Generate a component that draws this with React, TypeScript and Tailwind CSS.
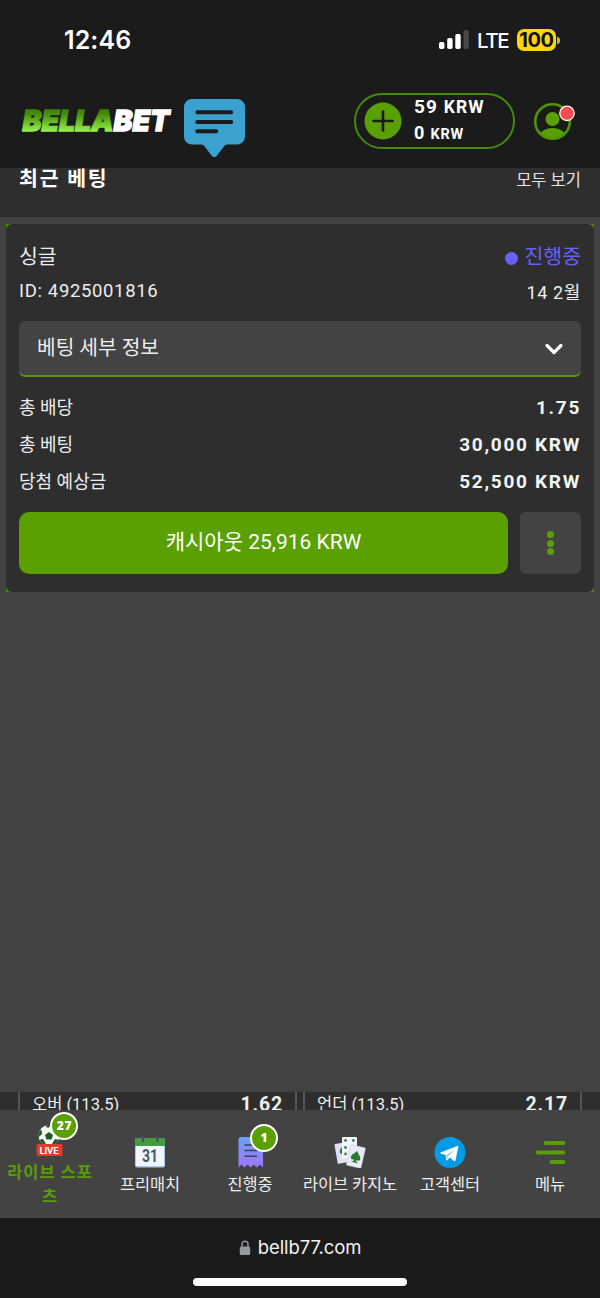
import React from 'react';

const BET_ROWS = [
	{ label: '총 배당', value: '1.75' },
	{ label: '총 베팅', value: '30,000 KRW' },
	{ label: '당첨 예상금', value: '52,500 KRW' },
];

function StatusBar() {
	return (
		<div className="flex h-20 items-center justify-between pl-16 pr-10 text-white">
			<span className="mt-px font-['Inter'] text-[25px] font-semibold leading-none tracking-[0.1px]">12:46</span>
			<div className="flex items-center">
				<svg width="31" height="20" viewBox="0 0 31 20">
					<rect x="0" y="12" width="5.4" height="7" rx="1.7" fill="#fff" />
					<rect x="8.2" y="8" width="5.4" height="11" rx="1.7" fill="#fff" />
					<rect x="16.3" y="4" width="5.4" height="15" rx="1.7" fill="#fff" />
					<rect x="24.5" y="0" width="5.4" height="19" rx="1.7" fill="#474747" />
				</svg>
				<span className="ml-[7px] mt-px w-[33px] font-['Inter'] text-[20.500px] font-medium leading-[24px] tracking-[-1.400px]">LTE</span>
				<span className="ml-[7px] flex h-[22px] w-[39px] items-center justify-center rounded-[7px] bg-[#ffd60a] font-['Inter'] text-[20px] font-bold leading-[22px] tracking-[-0.4px] text-[#111]">
					100
				</span>
				<span className="ml-px h-[7px] w-[3px] rounded-r-full bg-[#d9b70d]" />
			</div>
		</div>
	);
}

function Logo() {
	return (
		<svg width="156" height="40" viewBox="0 -5 156 40">
			<defs>
				<linearGradient id="logoGreen" gradientUnits="userSpaceOnUse" x1="0" y1="3" x2="0" y2="25">
					<stop offset="0" stopColor="#3f7d08" />
					<stop offset="0.3" stopColor="#4d930d" />
					<stop offset="1" stopColor="#94f04a" />
				</linearGradient>
			</defs>
			<text x="2.500" y="24.700" textLength="147" lengthAdjust="spacingAndGlyphs" fontFamily="Inter, sans-serif" fontWeight="900" fontStyle="italic" fontSize="29" strokeWidth="1.300">
				<tspan fill="url(#logoGreen)" stroke="url(#logoGreen)">BELLA</tspan><tspan fill="#fff" stroke="#fff">BET</tspan>
			</text>
		</svg>
	);
}

function ChatIcon() {
	return (
		<svg width="62" height="60" viewBox="0 0 62 60">
			<path d="M8 1h45a8 8 0 0 1 8 8v29.500a8 8 0 0 1-8 8h-9.500c-2 0-3 1-4 2.500l-6.500 8.500c-2 2.200-3.500 2.200-5.500 0l-6.500-8.500c-1-1.500-2-2.500-4-2.500H8a8 8 0 0 1-8-8V9a8 8 0 0 1 8-8z" fill="#3ba1ce" />
			<path d="M13.300 14.300H47.200M13.300 23.900H47.200M13.300 33.300H32.200" stroke="#1b1b1b" strokeWidth="4" strokeLinecap="round" />
		</svg>
	);
}

function Header() {
	return (
		<header className="flex h-[88px] items-start justify-between pl-5 pr-6 pt-[13px]">
			<div className="flex items-start">
				<div className="pt-2"><Logo /></div>
				<div className="ml-2 pt-[5px]"><ChatIcon /></div>
			</div>
			<div className="flex items-center">
				<div className="flex h-[56px] w-[161px] items-center rounded-full border-2 border-[#458a0b] pl-2">
					<svg width="38" height="38" viewBox="0 0 38 38">
						<circle cx="19" cy="19" r="18.500" fill="#5aa002" />
						<path d="M9.500 19H28.500M19 9.500V28.500" stroke="#1b1b1b" strokeWidth="2.600" strokeLinecap="round" />
					</svg>
					<div className="-mt-[3px] ml-3 flex flex-col font-bold text-white">
						<span className="h-[26px] text-[19px] leading-[26px] tracking-[1.100px]">59 <span className="text-[17.500px]">KRW</span></span>
						<span className="h-[25px] text-[18px] leading-[25px] tracking-[0.8px]">0 <span className="text-[14.500px]">KRW</span></span>
					</div>
				</div>
				<svg className="ml-[18px]" width="43" height="42" viewBox="0 0 43 42">
					<defs>
						<clipPath id="avatarClip"><circle cx="19.500" cy="21.500" r="18" /></clipPath>
					</defs>
					<g fill="#5aa002" clipPath="url(#avatarClip)">
						<circle cx="19.500" cy="19" r="7" />
						<ellipse cx="19.500" cy="38.500" rx="14" ry="10.500" />
					</g>
					<circle cx="19.500" cy="21.500" r="17.300" fill="none" stroke="#4f9405" strokeWidth="2.600" />
					<circle cx="34" cy="13.300" r="7.200" fill="#ff4a50" stroke="#fff" strokeWidth="1.300" />
				</svg>
			</div>
		</header>
	);
}

function BetCard() {
	return (
		<section className="mx-[6px] bg-[#4b8d06]">
			<div className="rounded-[6px] bg-[#2e2e2e] px-[13px] pb-[18px] pt-4 text-[#ededed]">
				<div className="flex h-[35px] items-center justify-between text-[20.500px]">
					<span>싱글</span>
					<span className="flex items-center gap-[6px] text-[#6862fa]">
						<span className="mt-[2px] h-[13px] w-[13px] rounded-full bg-[#6862fa]" />
						진행중
					</span>
				</div>
				<div className="flex h-[34px] items-center justify-between text-[18.500px] tracking-[0.65px]">
					<span>ID: 4925001816</span>
					<span className="text-[18px]">14 2월</span>
				</div>
				<button className="mt-3 flex h-[56px] w-full items-center justify-between rounded-[6px] border-b-2 border-[#559807] bg-[#434343] pl-[18px] pr-[17px] text-[20.300px]">
					<span>베팅 세부 정보</span>
					<svg className="mt-px" width="20" height="14" viewBox="0 0 20 14">
						<path d="M3 3.500L10 10.500L17 3.500" fill="none" stroke="#fff" strokeWidth="3.200" strokeLinecap="round" strokeLinejoin="round" />
					</svg>
				</button>
				<div className="mt-3">
					{BET_ROWS.map((row) => (
						<div key={row.label} className="flex h-[37px] items-center justify-between">
							<span className="text-[18px]">{row.label}</span>
							<span className="mt-px text-[19px] font-bold tracking-[1.700px] text-[#f4f4f4]">{row.value}</span>
						</div>
					))}
				</div>
				<div className="mt-3 flex gap-3">
					<button className="h-[62px] w-[489px] rounded-[10px] bg-[#5aa002] pb-[1px] text-[21px] text-white">
						캐시아웃 25,916 KRW
					</button>
					<button className="flex flex-1 flex-col items-center justify-center gap-[1.500px] rounded-[6px] bg-[#434343]">
						<span className="h-[7px] w-[7px] rounded-full bg-[#5aa002]" />
						<span className="h-[7px] w-[7px] rounded-full bg-[#5aa002]" />
						<span className="h-[7px] w-[7px] rounded-full bg-[#5aa002]" />
					</button>
				</div>
			</div>
		</section>
	);
}

function OddsRow() {
	return (
		<div className="flex h-[18px] justify-between overflow-hidden bg-[#2e2e2e] px-[18px] text-[#ededed]">
			<div className="flex h-[26px] w-[279px] items-center justify-between border-x-2 border-[#555] pl-3 pr-3">
				<span className="text-[16.500px]">오버 (113.5)</span>
				<span className="text-[19.500px] font-bold tracking-[0.8px]">1.62</span>
			</div>
			<div className="flex h-[26px] w-[279px] items-center justify-between border-x-2 border-[#555] pl-3 pr-3">
				<span className="text-[16.500px]">언더 (113.5)</span>
				<span className="text-[19.500px] font-bold tracking-[0.8px]">2.17</span>
			</div>
		</div>
	);
}

function LiveIcon() {
	return (
		<svg width="32" height="32" viewBox="0 0 32 32">
			<defs>
				<clipPath id="ballClip"><circle cx="15" cy="11.500" r="10.500" /></clipPath>
			</defs>
			<circle cx="15" cy="11.500" r="10.500" fill="#f4f6f4" />
			<g clipPath="url(#ballClip)" fill="#1c5a22">
				<path d="M15 8l4 2.900-1.500 4.600h-5L11 10.900z" />
				<path d="M9 0l5 4L19 0zM3 6.500l4.500-.5L8 10l-4 4zM22 4l2 5 4 1V4zM5 16l4-1 3 5-5 1zM25 16l-4-1-3 5 5 1z" />
			</g>
			<rect x="2.500" y="20" width="26" height="12" rx="1.500" fill="#df3b30" />
			<text x="15.500" y="29.600" textAnchor="middle" textLength="20" fontFamily="Roboto, sans-serif" fontWeight="700" fontSize="9.500" fill="#fff">LIVE</text>
		</svg>
	);
}

function CalendarIcon() {
	return (
		<svg width="32" height="32" viewBox="0 0 32 32">
			<rect x="1" y="2" width="30" height="29.500" rx="2" fill="#a9c8ea" />
			<rect x="2" y="9" width="28" height="21" fill="#eef5fc" />
			<path d="M1 10V4a2 2 0 0 1 2-2h26a2 2 0 0 1 2 2v6z" fill="#439c43" />
			<path d="M9 1v4M23.500 1v4" stroke="#40535c" strokeWidth="2.400" strokeLinecap="round" />
			<text x="16" y="26.200" textAnchor="middle" textLength="16" lengthAdjust="spacingAndGlyphs" fontFamily="Roboto, sans-serif" fontWeight="700" fontSize="18.500" fill="#455a64">31</text>
		</svg>
	);
}

function ReceiptIcon() {
	return (
		<svg width="32" height="32" viewBox="0 0 32 32">
			<defs>
				<linearGradient id="receiptFill" x1="0" y1="0" x2="0" y2="1">
					<stop offset="0" stopColor="#6c9ffb" />
					<stop offset="1" stopColor="#9d77fb" />
				</linearGradient>
			</defs>
			<path d="M4.500 31.500V3.500a2.500 2.500 0 0 1 2.500-2.500H26.500a2.500 2.500 0 0 1 2.500 2.500v28l-3-3-3.100 3-3.100-3-3.100 3-3.100-3-3.100 3-3.100-3z" fill="url(#receiptFill)" />
			<path d="M11 9H22.500M11 14.500H22.500M11 20.300H22.500" stroke="#414145" strokeWidth="1.600" strokeLinecap="round" />
		</svg>
	);
}

function CardsIcon() {
	return (
		<svg width="32" height="32" viewBox="0 0 32 32">
			<g transform="rotate(-10 8 17)">
				<rect x="2" y="7" width="12" height="20" rx="1" fill="#dfe0f6" />
				<path d="M9 11c-4 3-4 6 0 8z" fill="#2a7a30" />
			</g>
			<rect x="8" y="1" width="15" height="22" rx="1" fill="#f4f3fb" />
			<g fill="#35863a">
				<circle cx="11.500" cy="4.500" r="1.400" />
				<circle cx="19.300" cy="4.500" r="1.400" />
				<circle cx="11.500" cy="11.500" r="1.400" />
				<circle cx="11.500" cy="18" r="1.400" />
			</g>
			<g transform="rotate(13 22 20)">
				<rect x="14.500" y="10" width="15" height="21" rx="1" fill="#e9e9f8" stroke="#c6c6e2" strokeWidth="0.500" />
				<path d="M22 14.500c1 2.700 4.800 4.500 4.800 7.500 0 2.300-2.500 2.800-3.800 1.500l.6 2.200h1.400v1h-6v-1h1.400l.6-2.200c-1.300 1.300-3.800.8-3.800-1.500 0-3 3.800-4.800 4.800-7.500z" fill="#267a2b" />
			</g>
		</svg>
	);
}

function TelegramIcon() {
	return (
		<svg width="32" height="32" viewBox="0 0 32 32">
			<circle cx="16" cy="16.500" r="15.500" fill="#039be5" />
			<path d="M6.500 16.500L23.300 10c.8-.3 1.200.1 1 1L21.500 24.200c-.2 1-.8 1.200-1.600.7l-4.200-3.300-2.300 2.600c-.6.6-1 .4-1.100-.4l-.6-4.500-5-1.700c-1-.3-1-.8-.2-1.100z" fill="#fff" />
			<path d="M12.300 19.300L20.500 13.500 14 20.500 13.500 23.500z" fill="#8fc9ea" />
		</svg>
	);
}

function MenuIcon() {
	return (
		<svg width="32" height="32" viewBox="0 0 32 32">
			<path d="M11.500 7H29.500M3.500 16.500H29.500M17.500 26H29.500" stroke="#5a9d06" strokeWidth="3.800" strokeLinecap="round" />
		</svg>
	);
}

const NAV_ITEMS = [
	{ label: '프리매치', icon: <CalendarIcon /> },
	{ label: '진행중', icon: <ReceiptIcon />, badge: '1' },
	{ label: '라이브 카지노', icon: <CardsIcon /> },
	{ label: '고객센터', icon: <TelegramIcon /> },
	{ label: '메뉴', icon: <MenuIcon /> },
];

function Badge({ text }: { text: string }) {
	return (
		<span className="absolute -right-[12px] -top-[12px] flex h-[28px] w-[28px] items-center justify-center rounded-full border-2 border-white bg-[#5aa002] pb-[1px] pl-px font-['Noto_Sans'] text-[12px] font-black leading-none tracking-[0.8px] text-white">
			{text}
		</span>
	);
}

function BottomNav() {
	return (
		<nav className="grid h-[108px] grid-cols-6 bg-[#434343] text-[16.400px] text-[#ededed]">
			<a className="flex flex-col items-center pt-[14px] font-bold tracking-[1px] text-[#5a9d06]">
				<span className="relative h-[32px]"><LiveIcon /><Badge text="27" /></span>
				<span className="mt-[5px] w-[94px] whitespace-nowrap text-center leading-[24px]">라이브 스포<br />츠</span>
			</a>
			{NAV_ITEMS.map((item) => (
				<a key={item.label} className="flex flex-col items-center pt-[26px]">
					<span className="relative h-[32px]">
						{item.icon}
						{item.badge && <Badge text={item.badge} />}
					</span>
					<span className="mt-[5px] whitespace-nowrap leading-[24px] tracking-[-0.1px]">{item.label}</span>
				</a>
			))}
		</nav>
	);
}

export default function App() {
	return (
		<div className="flex h-[1298px] w-[600px] flex-col overflow-hidden bg-[#424242] font-['Roboto','Noto_Sans_CJK_KR',sans-serif]">
			<div className="h-[168px] bg-[#1b1b1b]">
				<StatusBar />
				<Header />
			</div>
			<div className="flex h-[49px] justify-between overflow-hidden bg-[#2e2e2e] px-[19px]">
				<span className="-mt-[4px] text-[20.500px] font-bold leading-[30px] tracking-[1.800px] text-white">최근 베팅</span>
				<span className="text-[16.500px] leading-[26px] text-[#e4e4e4]">모두 보기</span>
			</div>
			<main className="flex-1 pt-[7px]">
				<BetCard />
			</main>
			<OddsRow />
			<BottomNav />
			<footer className="flex h-[80px] flex-col items-center bg-[#1b1b1b] pt-[18px]">
				<div className="flex h-[24px] items-center text-[18.500px] text-[#f2f2f2]">
					<svg width="12" height="16" viewBox="0 0 12 16">
						<rect x="0.800" y="6.500" width="10.400" height="8.500" rx="1.500" fill="#98989f" />
						<path d="M3 7V4.200a3 3 0 0 1 6 0V7" fill="none" stroke="#98989f" strokeWidth="1.400" />
					</svg>
					<span className="ml-[7px] font-['Inter'] tracking-[-0.1px]">bellb77.com</span>
				</div>
				<div className="mt-[18px] h-2 w-[214px] rounded-full bg-white" />
			</footer>
		</div>
	);
}
